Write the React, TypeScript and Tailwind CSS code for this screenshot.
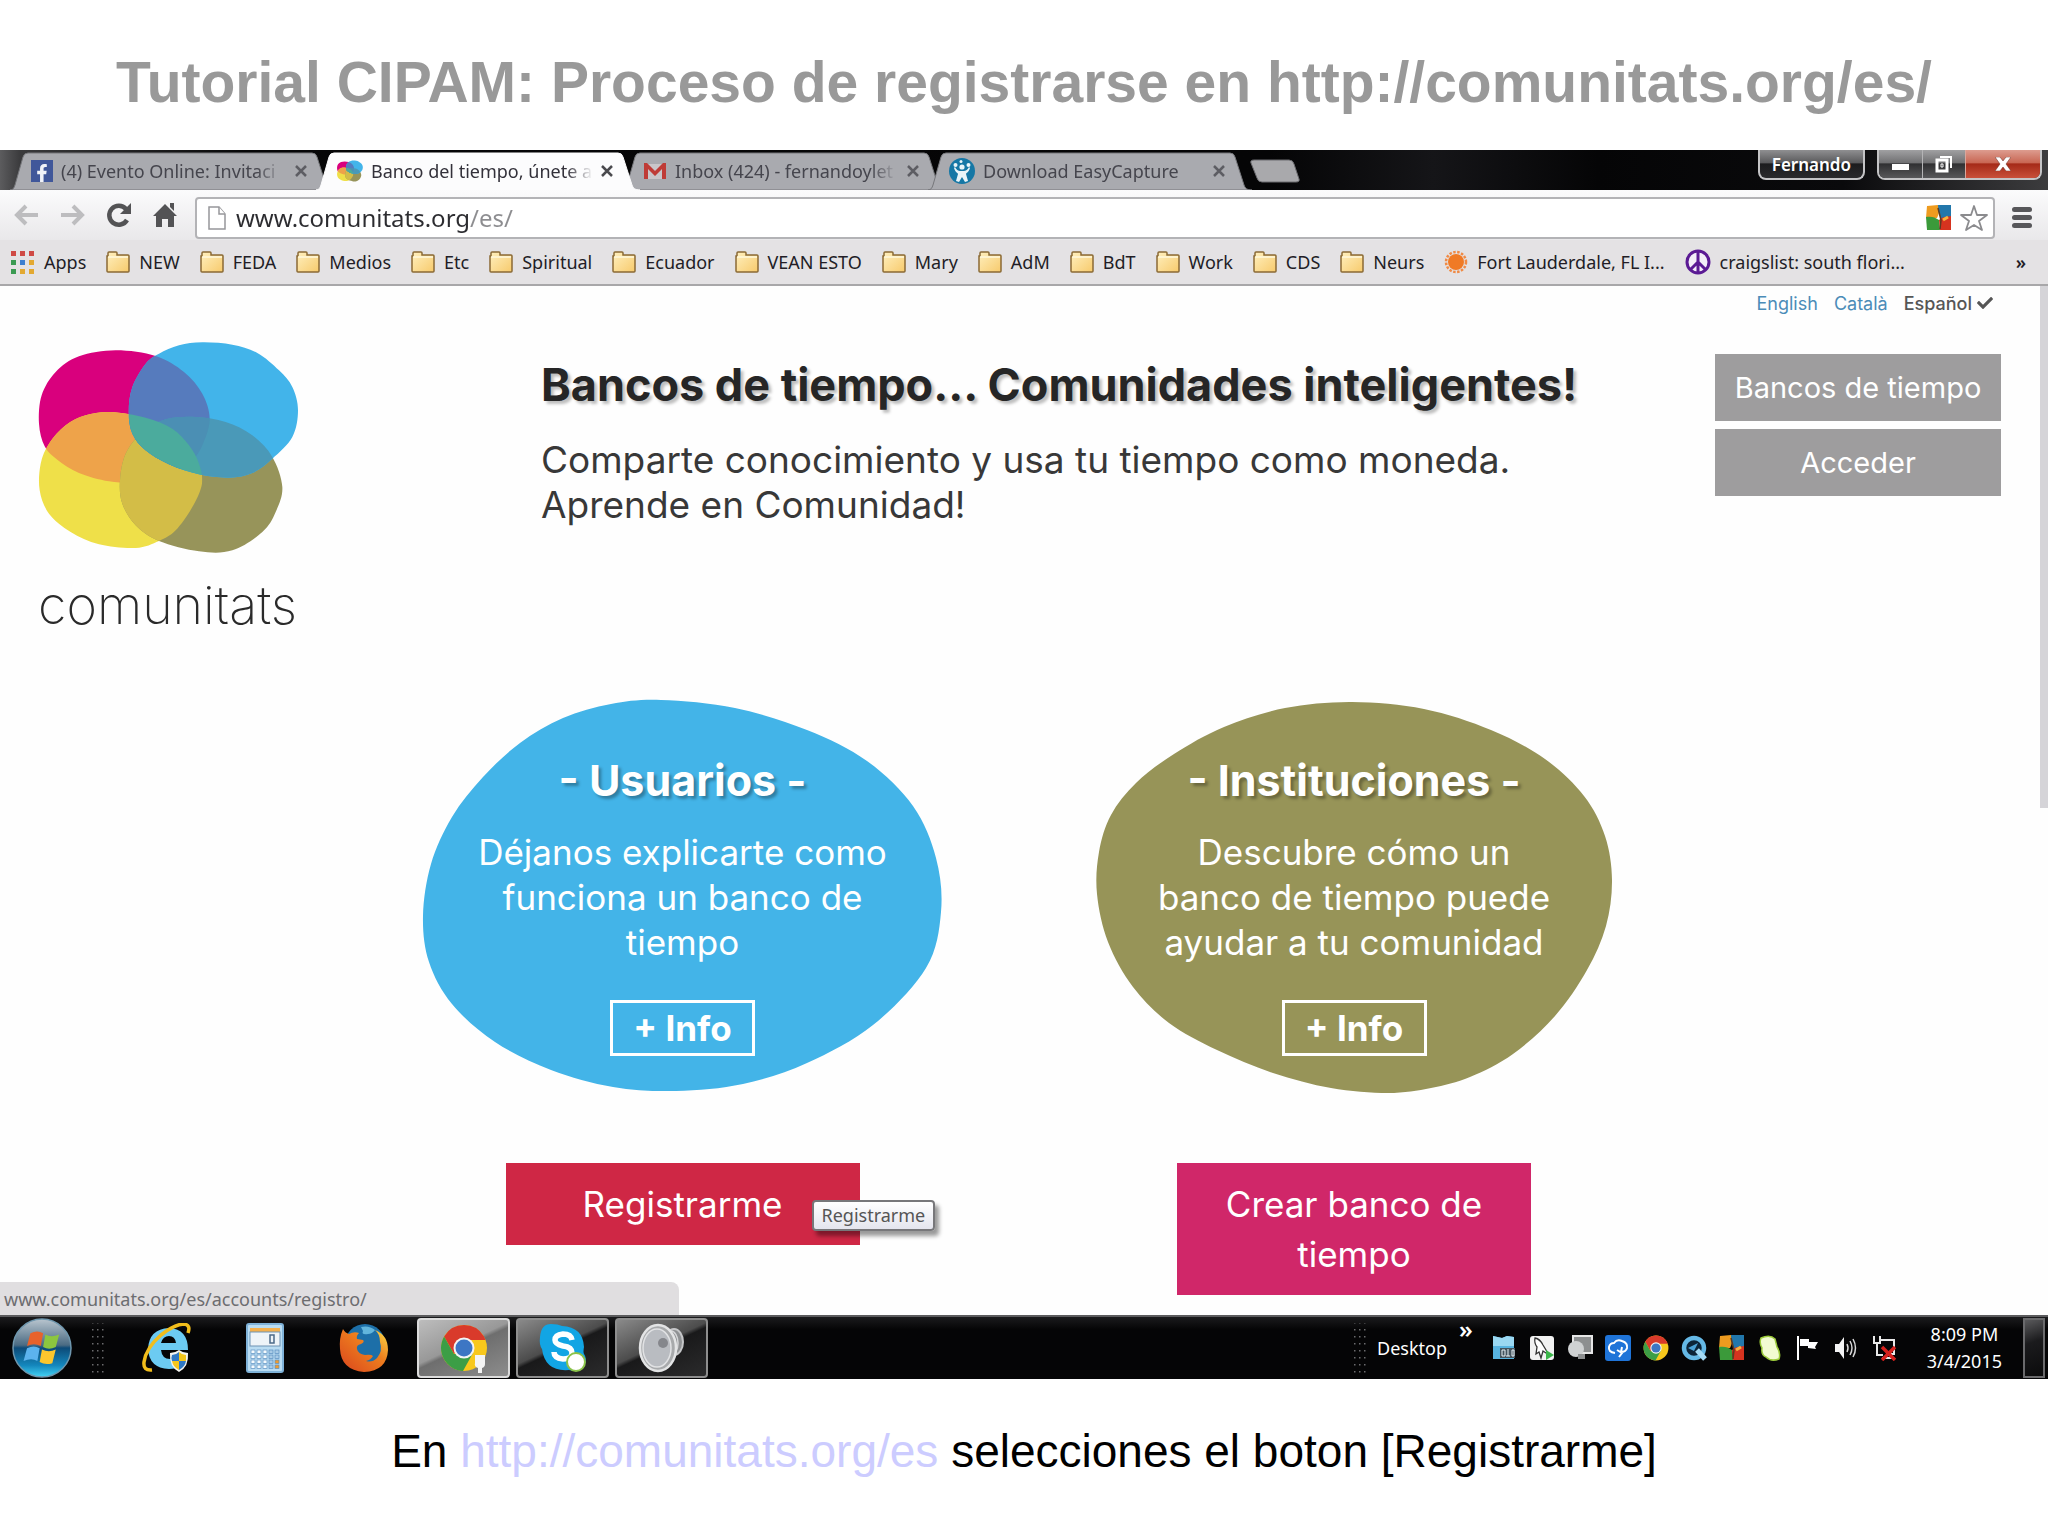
import React, { useId } from "react";
import { FaFacebookF, FaCheck } from "react-icons/fa";

type Pt = [number, number];

/** Closed smooth outline through a ring of points (Catmull-Rom to Bézier). */
function smooth(points: Pt[]): string {
  const n = points.length;
  let d = `M${points[0][0]},${points[0][1]}`;
  for (let i = 0; i < n; i++) {
    const p0 = points[(i + n - 1) % n];
    const p1 = points[i];
    const p2 = points[(i + 1) % n];
    const p3 = points[(i + 2) % n];
    d += `C${p1[0] + (p2[0] - p0[0]) / 6},${p1[1] + (p2[1] - p0[1]) / 6} ${p2[0] - (p3[0] - p1[0]) / 6},${p2[1] - (p3[1] - p1[1]) / 6} ${p2[0]},${p2[1]}`;
  }
  return d + "Z";
}

const MAGENTA = smooth([[350, 90], [470, 107], [555, 155], [610, 220], [632, 295], [612, 370], [575, 425], [500, 470], [420, 487], [330, 483], [240, 458], [175, 418], [137, 378], [120, 310], [128, 225], [170, 155], [240, 108]]);
const BLUE = smooth([[610, 66], [700, 73], [775, 98], [840, 150], [880, 200], [897, 270], [880, 350], [820, 415], [760, 458], [690, 472], [600, 462], [510, 432], [440, 390], [400, 340], [389, 275], [400, 200], [440, 130], [480, 100], [540, 75]]);
const YELLOW = smooth([[335, 275], [440, 292], [520, 325], [570, 375], [600, 430], [609, 490], [580, 560], [530, 630], [480, 662], [410, 683], [300, 672], [215, 635], [150, 580], [122, 510], [125, 430], [150, 370], [200, 315], [260, 285]]);
const OLIVE = smooth([[590, 290], [680, 305], [760, 345], [820, 410], [850, 500], [830, 575], [790, 635], [700, 690], [600, 693], [480, 662], [410, 615], [370, 550], [363, 480], [380, 400], [430, 335], [500, 297]]);

const USERS_BLOB = smooth([[238, 0], [312, 8], [384, 30], [444, 61], [490, 106], [513, 158], [518, 212], [503, 268], [450, 325], [384, 363], [320, 384], [253, 391], [190, 387], [128, 370], [72, 342], [29, 304], [6, 262], [0, 216], [8, 164], [29, 117], [60, 77], [97, 43], [140, 18], [188, 4]]);
const INSTITUTIONS_BLOB = smooth([[256, 0], [328, 7], [395, 28], [449, 57], [488, 94], [509, 134], [516, 178], [510, 224], [491, 268], [459, 314], [417, 352], [374, 375], [335, 386], [292, 391], [235, 386], [177, 371], [121, 348], [73, 321], [37, 285], [12, 240], [1, 192], [3, 150], [15, 113], [40, 81], [78, 52], [128, 25], [189, 6]]);

function Logo({ className }: { className: string }) {
  const id = useId();
  return (
    <svg viewBox="118 62 784 636" className={className} aria-hidden="true">
      <clipPath id={id + "y"}><path d={YELLOW} /></clipPath>
      <clipPath id={id + "m"}><path d={MAGENTA} /></clipPath>
      <clipPath id={id + "b"}><path d={BLUE} /></clipPath>
      <path d={MAGENTA} fill="#d9007d" />
      <path d={YELLOW} fill="#efe049" />
      <path d={MAGENTA} fill="#eea34a" clipPath={`url(#${id}y)`} />
      <path d={OLIVE} fill="#97945a" />
      <path d={OLIVE} fill="#d3bd47" clipPath={`url(#${id}y)`} />
      <path d={BLUE} fill="#42b4ea" />
      <g clipPath={`url(#${id}b)`}>
        <path d={MAGENTA} fill="#567bbd" />
        <path d={OLIVE} fill="#4a99b8" />
        <path d={OLIVE} fill="#4b8fb4" clipPath={`url(#${id}m)`} />
        <path d={YELLOW} fill="#4bab9d" />
      </g>
    </svg>
  );
}

function GmailIcon() {
  return (
    <svg viewBox="0 0 24 24" className="size-6 shrink-0">
      <path d="M2 5h20v15H2z" fill="#c9c6c9" />
      <path d="M1 20V4h3l8 8 8-8h3v16h-4V10l-7 7-7-7v10z" fill="#bf3b36" />
    </svg>
  );
}

function EasyCaptureIcon() {
  return (
    <svg viewBox="0 0 26 26" className="size-[26px] shrink-0">
      <circle cx="13" cy="13" r="13" fill="#1577a5" />
      <g fill="#e9f4f8">
        <circle cx="13" cy="9" r="2.6" />
        <circle cx="6.500" cy="7" r="2" />
        <circle cx="19.500" cy="7" r="2" />
        <circle cx="12" cy="3.500" r="1.500" />
        <path d="M6 9c2 4 4 4 7 4s5 0 7-4l1 1c-1 4-4 5-4 6l2 7-3 1-3-5-3 5-3-1 2-7c0-1-3-2-4-6z" />
      </g>
    </svg>
  );
}

function ChromeIcon({ className }: { className: string }) {
  return (
    <svg viewBox="0 0 48 48" className={className}>
      <circle cx="24" cy="24" r="23" fill="#f8c81c" />
      <path d="M4.100 12.500A23 23 0 0 1 44 12.500L45.500 16H24L14 30z" fill="#d93a2b" />
      <path d="M4.100 12.500A23 23 0 0 0 23 47l10-18-19 1z" fill="#3c9e46" />
      <circle cx="24" cy="24" r="10.500" fill="#f4f4f4" />
      <circle cx="24" cy="24" r="8.500" fill="#3d76c4" />
    </svg>
  );
}

function AvgIcon() {
  return (
    <svg viewBox="0 0 26 26" className="size-[26px] shrink-0">
      <path d="M1 1l11-1c2 5 1 9-1 13H0z" fill="#ee9b1f" />
      <path d="M12 0h13v12l-9 3c-3-4-4-9-4-15z" fill="#2277ab" />
      <path d="M0 12c5-1 9 0 13 3l1 10H1z" fill="#3b9a3a" />
      <path d="M13 15c4-4 8-3 12-4v14H14z" fill="#d6331f" />
      <path d="M12 3l3 12-1 9" stroke="#5b3b22" strokeWidth="1.500" fill="none" />
      <path d="M17 15l5-3" stroke="#f7b23c" strokeWidth="3" />
    </svg>
  );
}

function Folder() {
  return (
    <svg viewBox="0 0 24 22" className="h-[22px] w-6 shrink-0">
      <defs>
        <linearGradient id="folder" x1="0" y1="0" x2="1" y2="1">
          <stop offset="0" stopColor="#fff0bf" />
          <stop offset="1" stopColor="#f7ca6c" />
        </linearGradient>
      </defs>
      <path d="M1 20V5h1V2q0-1 1-1h7q1 0 1 1v2h11q1 0 1 1v15q0 1-1 1H2q-1 0-1-1z" fill="url(#folder)" stroke="#8a6a35" strokeWidth="1.500" />
      <path d="M2 6h20" stroke="#fff8dd" strokeWidth="1.500" />
    </svg>
  );
}

function AppsIcon() {
  const colors = ["#cf4a45", "#cf4a45", "#cf4a45", "#3b9a52", "#3d7fd0", "#e3a932", "#3b9a52", "#e3a932", "#e3a932"];
  return (
    <svg viewBox="0 0 24 23" className="h-[23px] w-6 shrink-0">
      {colors.map((c, i) => (
        <rect key={i} x={(i % 3) * 9} y={Math.floor(i / 3) * 9} width="5" height="5" fill={c} />
      ))}
    </svg>
  );
}

function SunIcon() {
  return (
    <svg viewBox="0 0 24 24" className="size-6 shrink-0">
      <circle cx="12" cy="12" r="10" fill="none" stroke="#f08a45" strokeWidth="2.500" strokeDasharray="2.500 1.500" />
      <circle cx="12" cy="12" r="8" fill="#f07a25" />
    </svg>
  );
}

function PeaceIcon() {
  return (
    <svg viewBox="0 0 26 26" className="size-[26px] shrink-0" fill="none" stroke="#5b1a94" strokeWidth="3">
      <circle cx="13" cy="13" r="11" fill="#f3eef8" />
      <path d="M13 2v22M13 13l-8 8M13 13l8 8" />
    </svg>
  );
}

interface TabProps {
  title: string;
  icon: React.ReactNode;
  active?: boolean;
}

function Tab({ title, icon, active }: TabProps) {
  return (
    <div className={active ? "relative z-10 -mr-[18px] h-[38px] w-[324px]" : "relative -mr-[18px] h-[38px] w-[324px]"}>
      <svg viewBox="0 0 324 38" preserveAspectRatio="none" className="absolute inset-0 size-full" aria-hidden="true">
        <path
          d="M0 38C3 38 4 36 5 33L13 5Q14 1 18 1H302Q306 1 307 5L316 33C317 36 319 38 324 38z"
          fill={active ? "#fcfcfd" : "#a9aaaf"}
          stroke={active ? "#fcfcfd" : "#76777b"}
          strokeWidth="1"
        />
      </svg>
      <div className="relative flex h-full items-center gap-2 pl-[21px] pr-[27px]">
        {icon}
        <a href="#tab" className={active ? "w-[222px] overflow-hidden whitespace-nowrap text-[18px] text-[#33313a] [mask-image:linear-gradient(90deg,#000_88%,transparent)]" : "w-[222px] overflow-hidden whitespace-nowrap text-[18px] text-[#45454d] [mask-image:linear-gradient(90deg,#000_88%,transparent)]"}>
          {title}
        </a>
        <button type="button" aria-label="Cerrar pestaña" className="ml-auto">
          <svg viewBox="0 0 12 12" className="size-3" stroke={active ? "#4a4a4e" : "#5d5d63"} strokeWidth="2.500">
            <path d="M1 1l10 10M11 1L1 11" />
          </svg>
        </button>
      </div>
    </div>
  );
}

function TabStrip() {
  return (
    <div className="relative flex h-10 items-end overflow-hidden bg-[linear-gradient(90deg,#5c5c5e_0,#3a3a3c_1%,#060607_12%,#050506_62%,#151518_70%,#050506_78%,#0a0a0c_90%,#3c3c3e_100%)] pl-[10px]">
      <Tab
        title="(4) Evento Online: Invitaci"
        icon={
          <span className="flex size-[22px] shrink-0 items-end justify-end bg-[#40579a] pr-[2px]">
            <FaFacebookF className="size-[18px] text-[#f0f2f8]" />
          </span>
        }
      />
      <Tab title="Banco del tiempo, únete a" active icon={<Logo className="h-[22px] w-[26px] shrink-0" />} />
      <Tab title="Inbox (424) - fernandoylet" icon={<GmailIcon />} />
      <Tab title="Download EasyCapture" icon={<EasyCaptureIcon />} />
      <button type="button" aria-label="Nueva pestaña" className="mb-[7px] ml-[16px]">
        <svg viewBox="0 0 50 24" className="h-6 w-[50px]">
          <path d="M4 1h35q4 0 5 4l5 15q1 3-3 3H12q-4 0-5-4L1 4q-1-3 3-3z" fill="#a9a9ac" stroke="#6c6c70" />
        </svg>
      </button>
      <div className="ml-auto flex h-full items-start gap-[12px] pr-[6px]">
        <button type="button" className="h-[30px] rounded-b-lg border-2 border-t-0 border-[#c4c4c6] bg-[linear-gradient(#8f8f91,#5a5a5c_45%,#1c1c1e_50%,#2a2a2c)] px-3 text-[17px] leading-[27px] font-semibold text-white">
          Fernando
        </button>
        <div className="flex h-[30px] overflow-hidden rounded-b-lg border-2 border-t-0 border-[#c4c4c6]">
          <button type="button" aria-label="Minimizar" className="flex w-[43px] items-center justify-center bg-[linear-gradient(#a0a0a2,#717173_45%,#303032_50%,#58585a)]">
            <span className="mt-[6px] h-[6px] w-[17px] bg-white" />
          </button>
          <button type="button" aria-label="Restaurar" className="flex w-[43px] items-center justify-center border-l border-[#b4b4b6] bg-[linear-gradient(#a0a0a2,#717173_45%,#303032_50%,#58585a)]">
            <svg viewBox="0 0 18 18" className="size-[18px]" fill="none" stroke="#fff" strokeWidth="2">
              <path d="M5 2h11v11" />
              <rect x="2" y="5" width="10" height="11" strokeWidth="3" />
              <path d="M6 9h2v3H6z" strokeWidth="1" />
            </svg>
          </button>
          <button type="button" aria-label="Cerrar" className="flex w-[75px] items-center justify-center border-l border-[#d8a79d] bg-[linear-gradient(#dd9c8f,#c96754_45%,#a52a18_50%,#c9503a)]">
            <svg viewBox="0 0 16 14" className="h-[14px] w-4">
              <path d="M0 0h5l3 4 3-4h5l-5 7 5 7h-5l-3-4-3 4H0l5-7z" fill="#fff" stroke="#6a2a20" strokeWidth="0.500" />
            </svg>
          </button>
        </div>
      </div>
    </div>
  );
}

function Toolbar() {
  return (
    <div className="flex h-[50px] items-center bg-[linear-gradient(#fbfbfc,#e9e8ea)] pl-[14px] pr-4">
      <div className="flex items-center gap-[21px] pr-[18px]">
        <button type="button" aria-label="Atrás">
          <svg viewBox="0 0 25 22" className="h-[22px] w-[25px]" fill="none" stroke="#bdbdbf" strokeWidth="4">
            <path d="M12 2L3 11l9 9M3 11h21" />
          </svg>
        </button>
        <button type="button" aria-label="Adelante">
          <svg viewBox="0 0 25 22" className="h-[22px] w-[25px]" fill="none" stroke="#bdbdbf" strokeWidth="4">
            <path d="M13 2l9 9-9 9M22 11H1" />
          </svg>
        </button>
        <button type="button" aria-label="Recargar">
          <svg viewBox="0 0 26 26" className="size-[26px]">
            <path d="M21 18a9.500 9.500 0 1 1-1-11" fill="none" stroke="#535355" strokeWidth="4.500" />
            <path d="M25 1v11H14z" fill="#535355" />
          </svg>
        </button>
        <button type="button" aria-label="Inicio">
          <svg viewBox="0 0 24 26" className="h-[26px] w-6" fill="#535355">
            <path d="M12 2l12 12h-3v11h-6v-8H9v8H3V14H0z" />
            <path d="M17 1h4v8l-4-4z" />
          </svg>
        </button>
      </div>
      <div className="mt-[6px] flex h-[42px] grow items-center rounded-sm border-2 border-[#b3b3b6] bg-white pl-[11px] pr-[5px]">
        <svg viewBox="0 0 18 24" className="h-6 w-[18px] shrink-0" fill="#fff" stroke="#97979a" strokeWidth="1.500">
          <path d="M1 1h10l6 7v15H1z" />
          <path d="M11 1v7h6" />
        </svg>
        <input
          aria-label="Dirección"
          defaultValue="www.comunitats.org/es/"
          className="ml-[10px] grow bg-[linear-gradient(90deg,#2c2c30_233px,#8d8d90_233px)] bg-clip-text text-[24px] leading-9 text-transparent outline-none"
        />
        <div className="flex items-center gap-2">
          <AvgIcon />
          <svg viewBox="0 0 28 28" className="size-7" fill="#fff" stroke="#8b8b8e" strokeWidth="1.800">
            <path d="M14 2l3 9 10 0-8 6 3 9-8-5-8 5 3-9-8-6 10 0z" strokeLinejoin="round" />
          </svg>
        </div>
      </div>
      <button type="button" aria-label="Menú" className="ml-[17px] mt-1 flex w-5 flex-col gap-[3px]">
        <span className="h-[5px] rounded-full bg-[#57575a]" />
        <span className="h-[5px] rounded-full bg-[#57575a]" />
        <span className="h-[5px] rounded-full bg-[#57575a]" />
      </button>
    </div>
  );
}

const FOLDERS = ["NEW", "FEDA", "Medios", "Etc", "Spiritual", "Ecuador", "VEAN ESTO", "Mary", "AdM", "BdT", "Work", "CDS", "Neurs"];

function Bookmark({ icon, label }: { icon: React.ReactNode; label: string }) {
  return (
    <a href="#marcador" className="flex items-center gap-[9px] whitespace-nowrap">
      {icon}
      {label}
    </a>
  );
}

function BookmarksBar() {
  return (
    <div className="flex h-[46px] items-center gap-5 border-b-2 border-[#a8a7a9] bg-[#e4e2e4] pl-[11px] pr-[22px] text-[18px] text-[#221d26]">
      <Bookmark icon={<AppsIcon />} label="Apps" />
      {FOLDERS.map((f) => (
        <Bookmark key={f} icon={<Folder />} label={f} />
      ))}
      <Bookmark icon={<SunIcon />} label="Fort Lauderdale, FL I..." />
      <Bookmark icon={<PeaceIcon />} label="craigslist: south flori..." />
      <button type="button" aria-label="Más marcadores" className="ml-auto font-semibold">»</button>
    </div>
  );
}

interface BlobProps {
  path: string;
  viewBox: string;
  fill: string;
  title: string;
  lines: string[];
}

function Blob({ path, viewBox, fill, title, lines }: BlobProps) {
  return (
    <div className="relative h-[391px] w-full text-center text-white">
      <svg viewBox={viewBox} preserveAspectRatio="none" className="absolute inset-0 size-full overflow-visible" aria-hidden="true">
        <path d={path} fill={fill} />
      </svg>
      <div className="relative flex flex-col items-center pt-[52px]">
        <h2 className="text-[43px] leading-[56px] font-bold [text-shadow:3px_3px_3px_rgba(0,0,0,0.3)]">{title}</h2>
        <p className="mt-[22px] text-[35px] leading-[45px]">
          {lines.map((l) => (
            <span key={l} className="block">{l}</span>
          ))}
        </p>
        <a href="#info" className="mt-[35px] flex h-[56px] w-[145px] items-center justify-center border-3 border-white text-[35px] font-bold">
          + Info
        </a>
      </div>
    </div>
  );
}

function WebPage() {
  return (
    <div className="relative flex h-[1029px] bg-[#fefefe] font-['Inter',sans-serif]">
      <main className="min-w-0 grow">
        <nav aria-label="Idioma" className="flex h-[34px] items-center justify-end gap-[16px] pr-[42px] text-[18px] text-[#4b8cb8]">
          <a href="#en">English</a>
          <a href="#ca">Català</a>
          <a href="#es" className="flex items-center gap-[5px] font-medium text-[#565656]">
            Español <FaCheck className="size-4" />
          </a>
        </nav>
        <header className="grid h-[346px] grid-cols-[541px_1fr_286px] pr-[34px]">
          <a href="#inicio" className="flex flex-col pl-[38px] pt-[21px]">
            <Logo className="h-[212px] w-[262px]" />
            <span className="mt-[20px] text-[52px] leading-[66px] font-extralight text-[#2a2a2a]">comunitats</span>
          </a>
          <div className="pt-[37px]">
            <h1 className="text-[45px] leading-[56px] font-bold whitespace-nowrap text-[#262626] [text-shadow:3px_3px_3px_rgba(0,0,0,0.25)]">
              Bancos de tiempo... Comunidades inteligentes!
            </h1>
            <p className="mt-6 text-[37px] leading-[45px] whitespace-nowrap text-[#383838]">
              Comparte conocimiento y usa tu tiempo como moneda.
              <br />
              Aprende en Comunidad!
            </p>
          </div>
          <nav aria-label="Principal" className="flex flex-col gap-2 pt-[34px] text-[29px] text-white">
            <a href="#bancos" className="flex h-[67px] items-center justify-center bg-[#9e9d9e] whitespace-nowrap">Bancos de tiempo</a>
            <a href="#acceder" className="flex h-[67px] items-center justify-center bg-[#9e9d9e]">Acceder</a>
          </nav>
        </header>
        <div className="flex justify-center gap-[154px] pt-[34px] text-[35px] leading-[50px] text-white">
          <section className="flex w-[519px] flex-col items-center">
            <Blob path={USERS_BLOB} viewBox="0 0 519 391" fill="#43b4e8" title="- Usuarios -" lines={["Déjanos explicarte como", "funciona un banco de", "tiempo"]} />
            <div className="relative mt-[72px]">
              <a href="#registro" className="block w-[354px] bg-[#cf2745] py-4 text-center">Registrarme</a>
              <span role="tooltip" className="absolute top-[37px] left-[306px] rounded-sm border-2 border-[#77777a] bg-[linear-gradient(#fff,#e4e5ee)] px-[8px] font-['Noto_Sans',sans-serif] text-[18px] leading-[27px] text-[#555] shadow-[4px_5px_4px_rgba(0,0,0,0.4)]">
                Registrarme
              </span>
            </div>
          </section>
          <section className="flex w-[516px] flex-col items-center">
            <Blob path={INSTITUTIONS_BLOB} viewBox="0 -2 516 391" fill="#979458" title="- Instituciones -" lines={["Descubre cómo un", "banco de tiempo puede", "ayudar a tu comunidad"]} />
            <a href="#crear" className="mt-[72px] block w-[354px] bg-[#d02769] px-10 py-4 text-center">Crear banco de tiempo</a>
          </section>
        </div>
      </main>
      <div className="flex w-[13px] justify-end">
        <div className="h-[522px] w-2 bg-[#d5d4d8]" />
      </div>
      <div className="absolute bottom-0 left-0 h-[33px] w-[679px] rounded-tr-lg bg-[#e0dee0] pl-1 font-['Noto_Sans',sans-serif] text-[18px] leading-[34px] text-[#6d6d70]">
        www.comunitats.org/es/accounts/registro/
      </div>
    </div>
  );
}

function WindowsFlag({ x, y, s }: { x: number; y: number; s: number }) {
  return (
    <g transform={`translate(${x} ${y}) scale(${s})`}>
      <path d="M3 2q6-3 11 0l-2 11q-6-3-12 0z" fill="#e8622b" />
      <path d="M16 3q5 3 12 0l-3 11q-6 3-11 0z" fill="#8cc63f" />
      <path d="M0 15q6-3 11 0l-2 11q-5-3-12 0z" fill="#5cb3ee" />
      <path d="M13 16q6 3 12 0l-3 12q-6 2-11-1z" fill="#fcc62d" />
    </g>
  );
}

function StartOrb() {
  return (
    <svg viewBox="0 0 60 60" className="size-[60px]">
      <defs>
        <linearGradient id="orb" x1="0" y1="0" x2="0" y2="1">
          <stop offset="0" stopColor="#b9c6cf" />
          <stop offset="0.45" stopColor="#4b6b83" />
          <stop offset="0.5" stopColor="#0d4b78" />
          <stop offset="0.8" stopColor="#1487bd" />
          <stop offset="1" stopColor="#44d4f5" />
        </linearGradient>
      </defs>
      <circle cx="30" cy="30" r="29" fill="url(#orb)" stroke="#6f97ae" strokeWidth="1.500" />
      <WindowsFlag x={15} y={13} s={1.15} />
    </svg>
  );
}

function InternetExplorerIcon() {
  return (
    <svg viewBox="0 0 50 50" className="size-[50px]">
      <path d="M47 27H20q1 9 9 9 5 0 7-4h10Q42 46 28 46 8 45 7 26 8 6 28 5q19 1 19 22zM20 20h15q-1-7-7-7t-8 7z" fill="#6ccbf2" fillRule="evenodd" />
      <path d="M11 47q-9 1-8-8Q5 25 20 12 34 1 43 1q7 1 4 9" fill="none" stroke="#f1bd1b" strokeWidth="3.500" />
      <path d="M29 30q5 0 9-3 4 3 9 3 1 14-9 19-10-5-9-19z" fill="#f4f4f0" />
      <path d="M38 29v9h-7q-1-4 0-6 4 0 7-3zM38 38h7q-1 6-7 9z" fill="#2f78c4" />
      <path d="M38 29q3 3 7 3v6h-7zM31 38h7v9q-6-3-7-9z" fill="#f3c61c" />
    </svg>
  );
}

function CalculatorIcon() {
  return (
    <svg viewBox="0 0 38 50" className="h-[50px] w-[38px]">
      <rect x="1" y="1" width="36" height="48" rx="2" fill="#b9dcf2" stroke="#7fb2d8" strokeWidth="2" />
      <rect x="4" y="5" width="30" height="5" fill="#f3b04e" />
      <rect x="4" y="9" width="30" height="14" fill="#eef4f8" stroke="#6e93b4" />
      <path d="M24 12h4v8h-4z" fill="none" stroke="#4c6a88" strokeWidth="1.500" />
      {[0, 1, 2, 3].map((r) =>
        [0, 1, 2, 3, 4].map((c) => (
          <rect key={`${r}-${c}`} x={5 + c * 6} y={27 + r * 5} width="4" height="3.500" fill={r > 1 && c === 4 ? "#ef9a2e" : c > 2 ? "#a9cbe6" : "#f4fafe"} stroke="#5b8fc0" strokeWidth="0.700" />
        )),
      )}
    </svg>
  );
}

function FirefoxIcon() {
  return (
    <svg viewBox="0 0 50 50" className="size-[50px]">
      <defs>
        <linearGradient id="fox" x1="0" y1="1" x2="1" y2="0">
          <stop offset="0" stopColor="#d9441e" />
          <stop offset="0.6" stopColor="#ee7f1e" />
          <stop offset="1" stopColor="#fbe04a" />
        </linearGradient>
      </defs>
      <circle cx="26" cy="21" r="20" fill="#1d6fa8" />
      <path d="M22 4q8-2 14 3-3 4-7 4-7 1-5-3z" fill="#62b5dc" />
      <path d="M4 6q2 4 6 5 5-3 10-1-3 3-2 6l6 1q2 2-2 4-5 1-4 5 1 5 8 6 6-1 8 1-2 4-7 5 6 2 11-3 6-7 3-16 0-8-5-12 13 5 13 20-1 21-24 22Q2 47 1 26 0 15 4 6z" fill="url(#fox)" />
    </svg>
  );
}

function SkypeIcon() {
  return (
    <svg viewBox="0 0 48 50" className="h-[50px] w-12">
      <path d="M12 1q7 0 11 2 21 1 22 21-1 5 0 7 3 4 1 10-6 9-16 6-24 2-27-21Q0 22 1 14 2 1 12 1z" fill="#12a5e4" />
      <path d="M33 17q-1-6-9-6-8 1-8 6 0 4 8 6 9 1 9 7 0 6-9 6-9-1-9-7" fill="none" stroke="#fff" strokeWidth="5.500" />
      <circle cx="37" cy="39" r="9" fill="#fff" stroke="#8bc34a" strokeWidth="2" />
    </svg>
  );
}

function SpeakerIcon() {
  return (
    <svg viewBox="0 0 48 50" className="h-[50px] w-12">
      <path d="M25 3l9 5q6 2 6 11t-6 12l-9 10z" fill="#77797b" />
      <ellipse cx="36" cy="19" rx="9" ry="13" fill="#8f9193" stroke="#c5c6c8" strokeWidth="2" />
      <ellipse cx="33" cy="20" rx="7" ry="12" fill="none" stroke="#d5d6d8" strokeWidth="1.500" />
      <ellipse cx="20" cy="25" rx="18" ry="23" fill="#a8aaac" stroke="#e3e4e5" strokeWidth="2.500" />
      <ellipse cx="19" cy="25" rx="14" ry="19" fill="#b9bcc1" stroke="#e1e2e4" strokeWidth="1.500" />
      <circle cx="25" cy="20" r="5" fill="#85878c" />
    </svg>
  );
}

function TrayIcons() {
  const box = "size-[26px]";
  return (
    <div className="flex items-center gap-[12px]">
      <svg viewBox="0 0 26 26" className={box}>
        <path d="M2 1l9 2 5-2 7 1v22H2z" fill="#58b4e0" />
        <path d="M2 1l9 2 5-2 7 1v9H2z" fill="#9ad8f2" />
        <path d="M9 13h15v10H9z" fill="#44545e" />
        <path d="M11 15h3v6h-3zM17 14v7m-2 0h4m2-6h2v6h-2z" stroke="#e8f2f6" fill="none" />
      </svg>
      <svg viewBox="0 0 26 26" className={box}>
        <rect x="1" y="1" width="24" height="24" rx="3" fill="#f2f2f2" />
        <path d="M6 3q5 1 8 7l6 10-6-4-2 7-2-6-3 2 1-7Q5 8 6 3z" fill="#fff" stroke="#333" strokeWidth="1.300" />
        <path d="M17 15l8 5-8 5z" fill="#3bb54a" />
      </svg>
      <svg viewBox="0 0 26 26" className={box}>
        <rect x="6" y="1" width="19" height="17" fill="#8d8f90" stroke="#e6e6e6" strokeWidth="2" />
        <circle cx="9" cy="14" r="8" fill="#cfd1d2" />
        <path d="M11 19h7v5h-7z" fill="#8d8f90" />
      </svg>
      <svg viewBox="0 0 26 26" className={box}>
        <rect x="0" y="0" width="26" height="26" rx="3" fill="#1f74d8" />
        <path d="M10 18q-7-1-6-6 1-4 5-4 3-4 8-2 6 2 5 7-1 4-6 4l1-5M14 22l3-4-5-3" fill="none" stroke="#fff" strokeWidth="2" />
      </svg>
      <ChromeIcon className={box} />
      <svg viewBox="0 0 26 26" className={box}>
        <circle cx="13" cy="13" r="10" fill="#0c2438" stroke="#65b9e6" strokeWidth="4.500" />
        <path d="M16 15l8 9" stroke="#a5dbf5" strokeWidth="5" />
        <path d="M7 13l10-5-4 8z" fill="#4aa1d6" />
      </svg>
      <AvgIcon />
      <svg viewBox="0 0 26 26" className={box}>
        <path d="M4 3q9-4 14 1l2 8q4 6 2 12-8 3-13-2-5-2-4-9-3-5-1-10z" fill="#f2fbd2" stroke="#9ccb3b" strokeWidth="1.500" />
      </svg>
      <svg viewBox="0 0 26 26" className={box} fill="#fff">
        <path d="M2 1h2v24H2zM5 4h9v3h9l-3 5 1 2-8-1v-2H5z" />
      </svg>
      <svg viewBox="0 0 26 26" className={box}>
        <path d="M2 9h4l5-7v22l-5-7H2z" fill="#f4f4f4" />
        <path d="M14 9q2 4 0 8M17 6q4 7 0 14M20 4q5 9 0 18" fill="none" stroke="#d8d8d8" strokeWidth="1.500" />
      </svg>
      <svg viewBox="0 0 26 26" className={box} fill="none">
        <path d="M3 1v7h6V1M6 8v12h6M9 5h14v14h-8M11 23h12" stroke="#e9e9e9" strokeWidth="2" />
        <path d="M11 12l13 13M24 12L11 25" stroke="#d8211d" strokeWidth="3.500" />
      </svg>
    </div>
  );
}

function Grip() {
  return (
    <svg viewBox="0 0 12 50" className="h-[50px] w-3" fill="#6b6b6d" aria-hidden="true">
      {[0, 1, 2, 3, 4, 5, 6, 7].map((r) =>
        [0, 1, 2].map((c) => <rect key={`${r}-${c}`} x={c * 5} y={r * 7 - 1} width="1.500" height="1.500" />),
      )}
    </svg>
  );
}

const TASK = "flex h-[60px] w-[93px] items-center justify-center rounded-sm border-2";

function Taskbar() {
  return (
    <div className="flex h-16 items-center border-t-2 border-[#5b5b5d] bg-[linear-gradient(#1b1b1d,#050506_20%,#050506)] pr-[3px] pl-3 text-[18px] text-white">
      <button type="button" aria-label="Inicio"><StartOrb /></button>
      <div className="ml-5"><Grip /></div>
      <div className="ml-[37px] flex items-center">
        <button type="button" aria-label="Internet Explorer"><InternetExplorerIcon /></button>
        <button type="button" aria-label="Calculadora" className="ml-[55px]"><CalculatorIcon /></button>
        <button type="button" aria-label="Firefox" className="ml-[55px]"><FirefoxIcon /></button>
      </div>
      <div className="ml-[28px] flex gap-[6px]">
        <button type="button" aria-label="Chrome" className={`${TASK} border-[#dcdcdc] bg-[linear-gradient(155deg,#bdbdbd,#989898_45%,#6e6e6e_50%,#8d8d8d)]`}>
          <span className="relative">
            <ChromeIcon className="size-12" />
            <svg viewBox="0 0 12 20" className="absolute right-[2px] -bottom-[2px] h-5 w-3" fill="#f4f4f4">
              <path d="M1 1h10v9q0 3-3 4v5H4v-5q-4-1-3-5z" />
            </svg>
          </span>
        </button>
        <button type="button" aria-label="Skype" className={`${TASK} border-[#8e8e8e] bg-[linear-gradient(155deg,#8a8a8a,#4c4c4c_45%,#19191a_50%,#2b2b2c)]`}><SkypeIcon /></button>
        <button type="button" aria-label="Volumen" className={`${TASK} border-[#8e8e8e] bg-[linear-gradient(155deg,#8a8a8a,#4c4c4c_45%,#19191a_50%,#2b2b2c)]`}><SpeakerIcon /></button>
      </div>
      <div className="ml-auto flex items-center">
        <Grip />
        <a href="#escritorio" className="ml-[11px]">Desktop</a>
        <button type="button" aria-label="Más" className="ml-3 mb-[38px] text-[24px] leading-6 font-semibold">»</button>
        <div className="ml-[18px]"><TrayIcons /></div>
        <time className="ml-[30px] block text-center leading-[27px]">
          8:09 PM
          <br />
          3/4/2015
        </time>
        <button type="button" aria-label="Mostrar escritorio" className="ml-[21px] h-[60px] w-[22px] border-2 border-[#6a6a6c] bg-[linear-gradient(160deg,#5a5a5c,#1b1b1d_40%,#0b0b0c)]" />
      </div>
    </div>
  );
}

export default function App() {
  return (
    <div className="min-h-screen bg-white font-['Noto_Sans',sans-serif]">
      <h1 className="pt-[50px] pb-9 text-center font-['Liberation_Sans',sans-serif] text-[57px] leading-[64px] font-bold text-[#999]">
        Tutorial CIPAM: Proceso de registrarse en http://comunitats.org/es/
      </h1>
      <div>
        <TabStrip />
        <Toolbar />
        <BookmarksBar />
        <WebPage />
        <Taskbar />
      </div>
      <p className="pt-11 text-center font-['Liberation_Sans',sans-serif] text-[46px] leading-[56px] text-black">
        En <a href="http://comunitats.org/es" className="text-[#ccccff]">http://comunitats.org/es</a> selecciones el boton [Registrarme]
      </p>
    </div>
  );
}
